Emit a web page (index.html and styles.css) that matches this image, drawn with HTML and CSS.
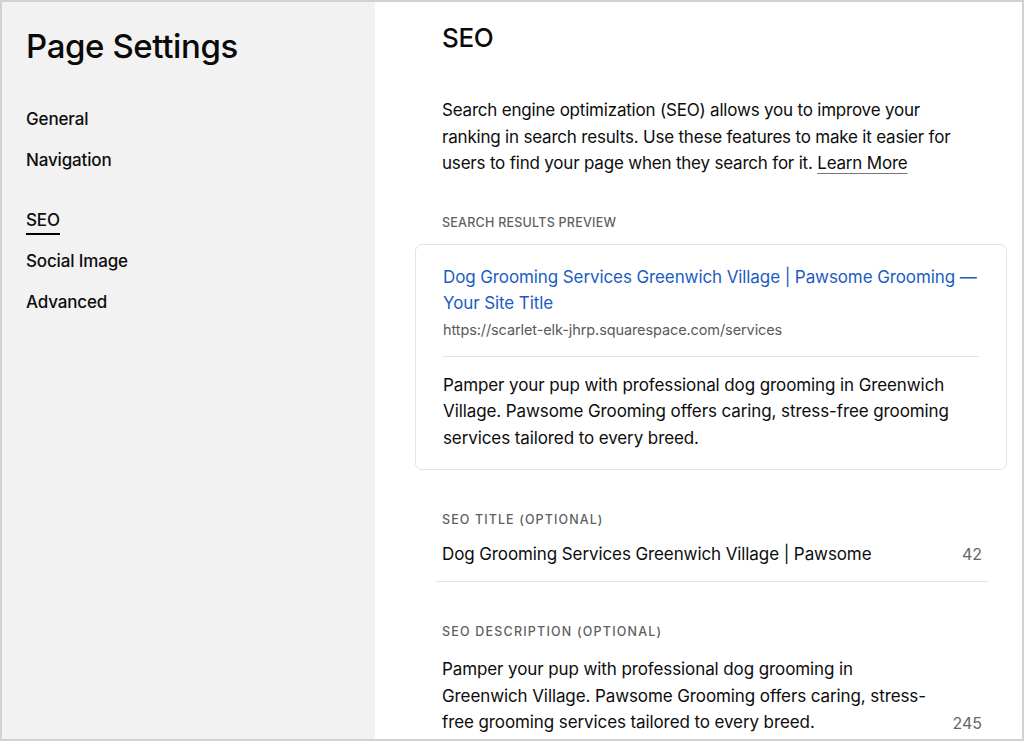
FILE: index.html
```html
<!DOCTYPE html>
<html lang="en">
<head>
<meta charset="utf-8">
<title>Page Settings – SEO</title>
<link rel="stylesheet" href="styles.css">
</head>
<body>
<div class="frame">
  <aside class="sidebar">
    <h1 class="side-title">Page Settings</h1>
    <nav class="side-nav">
      <div class="nav-group">
        <a class="nav-item">General</a>
        <a class="nav-item">Navigation</a>
      </div>
      <div class="nav-group nav-group-2">
        <a class="nav-item active"><span>SEO</span></a>
        <a class="nav-item">Social Image</a>
        <a class="nav-item">Advanced</a>
      </div>
    </nav>
  </aside>
  <main class="main">
    <h2 class="heading">SEO</h2>
    <p class="intro">Search engine optimization (SEO) allows you to improve your ranking in search results. Use these features to make it easier for users to find your page when they search for it. <a class="learn">Learn More</a></p>

    <div class="label preview-label">Search Results Preview</div>
    <div class="card">
      <div class="result-title">Dog Grooming Services Greenwich Village | Pawsome Grooming — Your Site Title</div>
      <div class="result-url">https://scarlet-elk-jhrp.squarespace.com/services</div>
      <div class="card-divider"></div>
      <div class="result-desc">Pamper your pup with professional dog grooming in Greenwich Village. Pawsome Grooming offers caring, stress-free grooming services tailored to every breed.</div>
    </div>

    <div class="label field-label title-label">SEO Title (Optional)</div>
    <div class="field">
      <div class="field-value">Dog Grooming Services Greenwich Village | Pawsome</div>
      <div class="count">42</div>
    </div>

    <div class="label field-label desc-label">SEO Description (Optional)</div>
    <div class="field field-desc">
      <div class="field-value desc-value">Pamper your pup with professional dog grooming in Greenwich Village. Pawsome Grooming offers caring, stress-free grooming services tailored to every breed.</div>
      <div class="count">245</div>
    </div>
  </main>
</div>
</body>
</html>
```

FILE: styles.css
```css
* { box-sizing: border-box; }
html, body { margin: 0; padding: 0; background: #fff; }
body {
  font-family: Inter, "Liberation Sans", Arial, sans-serif;
  color: #111;
}
.frame {
  width: 1024px;
  height: 741px;
  border: 2px solid #d2d2d2;
  display: flex;
  overflow: hidden;
  background: #fff;
}
.sidebar {
  width: 373px;
  flex: none;
  background: #f2f2f2;
  padding: 24px 0 0 24px;
}
.side-title {
  margin: 0;
  font-size: 33px;
  line-height: 40px;
  font-weight: 500;
  letter-spacing: -0.4px;
  color: #0a0a0a;
}
.side-nav { margin-top: 33px; }
.nav-group { display: flex; flex-direction: column; }
.nav-group-2 { margin-top: 19px; }
.nav-item {
  display: block;
  height: 41px;
  line-height: 41px;
  font-size: 17px;
  font-weight: 500;
  letter-spacing: -0.15px;
  color: #0d0d0d;
}
.nav-item.active span {
  display: inline-block;
  line-height: 22px;
  padding-bottom: 2px;
  border-bottom: 2px solid #000;
}
.main {
  flex: 1;
  padding: 20px 42px 0 67px;
  overflow: hidden;
}
.heading {
  margin: 0;
  font-size: 26px;
  line-height: 32px;
  font-weight: 500;
  letter-spacing: -0.4px;
  color: #0a0a0a;
}
.intro {
  margin: 43px 0 0;
  font-size: 17px;
  line-height: 26.5px;
  letter-spacing: -0.2px;
  color: #0d0d0d;
}
.learn {
  color: #0d0d0d;
  text-decoration: underline;
  text-decoration-color: #777;
  text-underline-offset: 4px;
  text-decoration-thickness: 1px;
}
.label {
  font-size: 12.5px;
  line-height: 16px;
  font-weight: 500;
  letter-spacing: 0.8px;
  text-transform: uppercase;
  color: #5f5f5f;
}
.preview-label { margin-top: 38px; letter-spacing: 0.25px; }
.title-label { letter-spacing: 1.1px; }
.desc-label { letter-spacing: 1.2px; }
.card {
  margin: 13px -27px 0 -27px;
  border: 1px solid #e4e4e4;
  border-radius: 7px;
  padding: 19px 27px 18px 27px;
}
.result-title {
  font-size: 17px;
  line-height: 26px;
  letter-spacing: -0.1px;
  color: #1b5cc4;
}
.result-url {
  margin-top: 4px;
  font-size: 14.5px;
  line-height: 20px;
  color: #5a5a5a;
  letter-spacing: -0.1px;
}
.card-divider {
  height: 1px;
  background: #e2e2e2;
  margin-top: 16px;
}
.result-desc {
  margin-top: 15px;
  font-size: 17px;
  line-height: 26.5px;
  letter-spacing: -0.1px;
  color: #0d0d0d;
}
.field-label { margin-top: 42px; }
.field {
  display: flex;
  justify-content: space-between;
  align-items: flex-end;
  margin: 13px -8px 0 -6px;
  padding: 0 6px 14px 6px;
  border-bottom: 1px solid #e2e2e2;
}
.field-value {
  font-size: 17px;
  line-height: 26px;
  letter-spacing: -0.1px;
  color: #0d0d0d;
}
.count {
  font-size: 16px;
  line-height: 26px;
  color: #666;
}
.field-desc { border-bottom: none; margin-top: 16px; padding-bottom: 13px; }
.desc-value { width: 486px; line-height: 26.5px; }
```
